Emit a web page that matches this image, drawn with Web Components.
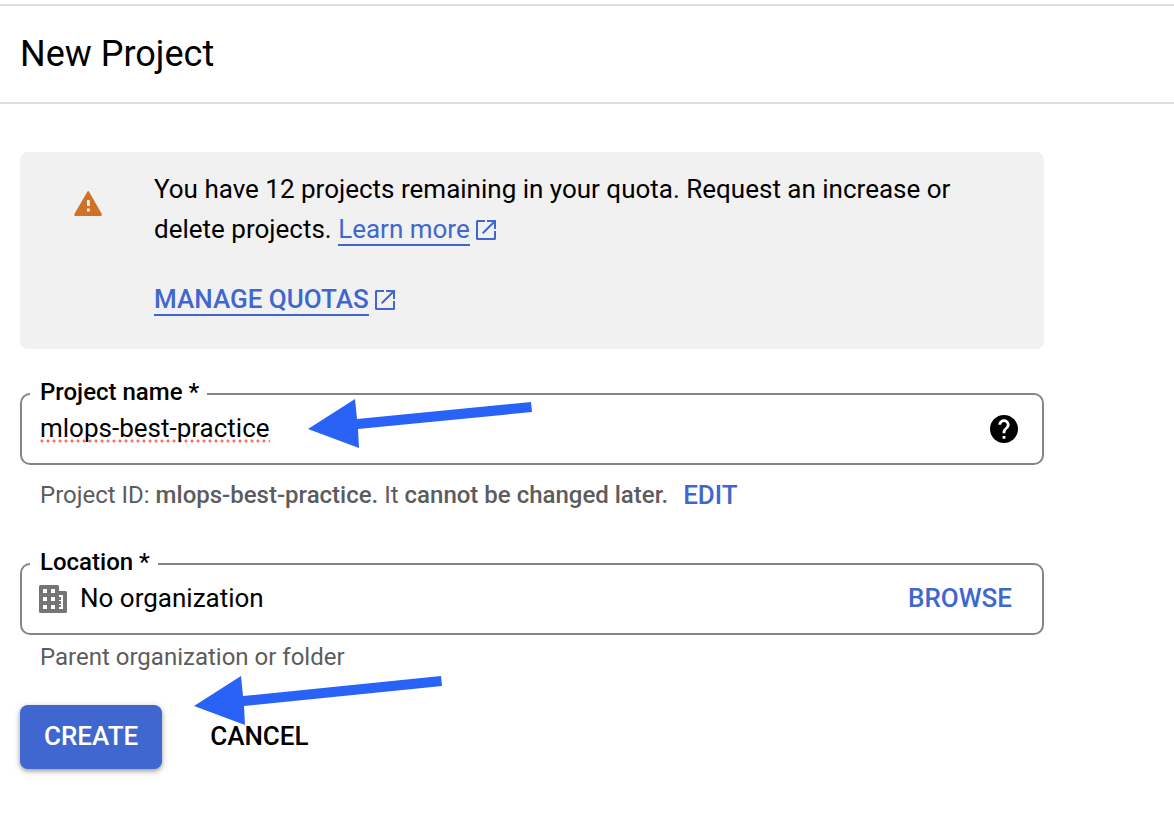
<!DOCTYPE html>
<html lang="en">
<head>
<meta charset="utf-8">
<meta name="viewport" content="width=device-width, initial-scale=1">
<title>New Project</title>
<style>
  body {
    margin: 0;
    background: #fff;
    color: #000;
    font: 400 26px/40px Roboto, "Liberation Sans", sans-serif;
    --blue: #4067cf;
    --line: #80868b;
    --muted: #5c5c5c;
  }
</style>
</head>
<body>
<new-project-page></new-project-page>

<script>
const define = (name, html, setup) => {
  const template = document.createElement('template');
  template.innerHTML = html;
  customElements.define(name, class extends HTMLElement {
    constructor() {
      super();
      this.attachShadow({ mode: 'open' }).append(template.content.cloneNode(true));
    }
    connectedCallback() {
      if (setup) setup(this, this.shadowRoot);
    }
  });
};

define('page-header', `
  <style>
    :host { display: block; margin-top: 4px; padding: 28px 20px; border: solid #dfdfdf; border-width: 2px 0; }
    h1 { margin: 0; font-size: 36px; line-height: 40px; font-weight: 400; }
  </style>
  <h1><slot></slot></h1>
`);

define('external-link', `
  <style>
    :host { display: inline; white-space: nowrap; }
    a { color: var(--blue); text-decoration: none; border-bottom: 2px solid var(--blue); }
    svg { width: 24px; height: 24px; margin-left: 4px; vertical-align: -4px; fill: var(--blue); }
  </style><a href="#"><slot></slot></a><svg viewBox="0 0 24 24" aria-hidden="true"><path d="M4 2h7v2H4v16h16v-7h2v7.500Q22 22 20.500 22h-17Q2 22 2 20.500v-17Q2 2 3.500 2zM13 2h9v9h-2V5.400L9.400 16 8 14.600 18.600 4H13z"/></svg>
`);

define('quota-notice', `
  <style>
    :host { display: grid; grid-template-columns: 28px minmax(0, 1fr); column-gap: 52px; padding: 17px 80px 30px 54px; border-radius: 8px; background: #f1f1f1; }
    svg { width: 28px; height: 25px; margin-top: 22px; }
    p { margin: 0; }
    .action { margin-top: 30px; font-weight: 500; }
  </style>
  <svg viewBox="0 0 28 25" aria-label="Warning" role="img">
    <path fill="#cd7228" d="M13.300 .7Q14.200-.7 15.100 .7L27.800 23Q28.400 25 26.500 25h-25Q-.2 25 .4 23z"/>
    <path fill="#f1f1f1" d="M13 9h2.800v6H13zM13 17.500h2.800v3H13z"/>
  </svg>
  <div>
    <p><slot></slot></p>
    <p class="action"><slot name="action"></slot></p>
  </div>
`);

define('outlined-field', `
  <style>
    :host { display: block; }
    fieldset { display: block; margin: 0; min-width: 0; padding: 0 24px 15px 8px; border: 2px solid var(--line); border-radius: 10px; }
    legend { padding: 0 8px 0 10px; height: 28px; line-height: 24px; font-size: 24px; font-weight: 500; }
    .row { display: flex; align-items: center; height: 40px; padding-left: 10px; }
    input { field-sizing: content; min-width: 0; padding: 0; border: 0; outline: 0; background: none; color: inherit; font: inherit; line-height: 30px; height: 30px; }
    :host([misspelt]) input { background: radial-gradient(circle at 2px 2px, #ff7065 1px, transparent 2px) 0 26px / 6px 4px repeat-x; }
    .end { margin-left: auto; display: flex; }
  </style>
  <fieldset>
    <legend><label for="control"></label></legend>
    <div class="row">
      <slot name="start"></slot>
      <input id="control" type="text" spellcheck="false">
      <span class="end"><slot name="end"></slot></span>
    </div>
  </fieldset>
`, (host, root) => {
  const input = root.querySelector('input');
  root.querySelector('label').textContent = host.getAttribute('label');
  input.value = host.getAttribute('value');
  input.readOnly = host.hasAttribute('readonly');
});

define('app-button', `
  <style>
    :host { display: inline-block; }
    button { display: block; margin: 0; padding: 0; border: 0; background: none; font: inherit; font-weight: 500; font-size: 26px; line-height: 40px; color: #000; cursor: pointer; }
    :host([kind="link"]) button { color: var(--blue); }
    :host([kind="primary"]) button { padding: 11px 24px 13px; border-radius: 8px; background: var(--blue); color: #fff; box-shadow: 0 2px 4px rgba(0,0,0,.3), 0 2px 8px rgba(0,0,0,.15); }
  </style>
  <button type="button"><slot></slot></button>
`);

define('help-button', `
  <style>
    :host { display: block; }
    button { display: block; padding: 2px 0 0; border: 0; background: none; }
    svg { display: block; width: 28px; height: 28px; }
  </style>
  <button type="button" aria-label="Help"><svg viewBox="2 2 20 20"><path d="M12 2C6.480 2 2 6.480 2 12s4.480 10 10 10 10-4.480 10-10S17.520 2 12 2zm1 17h-2v-2h2v2zm2.070-7.750l-.9.920C13.450 12.900 13 13.500 13 15h-2v-.5c0-1.100.45-2.100 1.170-2.830l1.240-1.260c.37-.36.59-.86.59-1.410 0-1.100-.9-2-2-2s-2 .9-2 2H8c0-2.210 1.790-4 4-4s4 1.790 4 4c0 .88-.36 1.680-.93 2.250z"/></svg></button>
`);

define('building-icon', `
  <style>
    :host { display: block; margin: 0 12px 0 -1px; padding-top: 2px; }
    svg { display: block; width: 29px; height: 28px; }
  </style>
  <svg viewBox="0 0 29 28" aria-hidden="true">
    <path fill="#757575" d="M1.500 0h17q1.500 0 1.500 1.500V6h6.500q1.500 0 1.500 1.500v19q0 1.500-1.500 1.500h-25Q0 28 0 26.500v-25Q0 0 1.500 0z"/>
    <path fill="#fff" d="M4 4h4v4H4zM12 4h4v4h-4zM4 12h4v4H4zM12 12h4v4h-4zM4 20h4v4H4zM12 20h4v4h-4zM20 10h4v14h-4v-2h2v-2h-2v-1h2v-3h-2v-1h2v-3h-2z"/>
  </svg>
`);

define('callout-arrow', `
  <style>
    :host { position: absolute; pointer-events: none; }
    svg { display: block; fill: #2962f6; }
  </style>
  <svg height="50" aria-hidden="true"><polygon/></svg>
`, (host, root) => {
  const end = Number(host.getAttribute('length'));
  const tail = Number(host.getAttribute('tail'));
  root.querySelector('svg').setAttribute('width', end + 2);
  root.querySelector('polygon').setAttribute('points',
    `0,30 47,0 49,20 ${end},${tail} ${end + 1},${tail + 10} 50,30 51,49`);
});

define('new-project-page', `
  <style>
    :host { display: block; }
    main { max-width: 1024px; padding: 48px 20px; }
    .field { position: relative; margin-top: 31px; }
    .hint { display: flex; align-items: center; margin: 10px 20px 0; font-size: 24px; color: var(--muted); }
    .hint b { font-weight: 500; }
    .hint app-button { margin-left: 15px; }
    .location { margin-top: 35px; }
    .location .hint { margin-top: 2px; }
    .browse { padding-right: 6px; }
    .actions { position: relative; display: flex; align-items: flex-start; gap: 48px; margin-top: 28px; }
    .actions > app-button:not([kind]) { padding-top: 11px; }
    .at-name { left: 288px; top: 19px; }
    .at-create { left: 174px; top: -29px; }
  </style>
  <page-header>New Project</page-header>
  <main>
    <quota-notice>
      <span>You have 12 projects remaining in your quota. Request an increase or</span> <span>delete projects.</span> <external-link>Learn more</external-link>
      <external-link slot="action">MANAGE QUOTAS</external-link>
    </quota-notice>
    <div class="field">
      <outlined-field label="Project name *" value="mlops-best-practice" misspelt>
        <help-button slot="end"></help-button>
      </outlined-field>
      <div class="hint"><span>Project ID: <b>mlops-best-practice.</b> It <b>cannot be changed later.</b></span><app-button kind="link">EDIT</app-button></div>
      <callout-arrow class="at-name" length="223" tail="3"></callout-arrow>
    </div>
    <div class="field location">
      <outlined-field label="Location *" value="No organization" readonly>
        <building-icon slot="start"></building-icon>
        <app-button slot="end" class="browse" kind="link">BROWSE</app-button>
      </outlined-field>
      <div class="hint">Parent organization or folder</div>
    </div>
    <div class="actions">
      <app-button kind="primary">CREATE</app-button>
      <app-button>CANCEL</app-button>
      <callout-arrow class="at-create" length="247" tail="0"></callout-arrow>
    </div>
  </main>
</new-project-page>
`);
</script>
</body>
</html>
